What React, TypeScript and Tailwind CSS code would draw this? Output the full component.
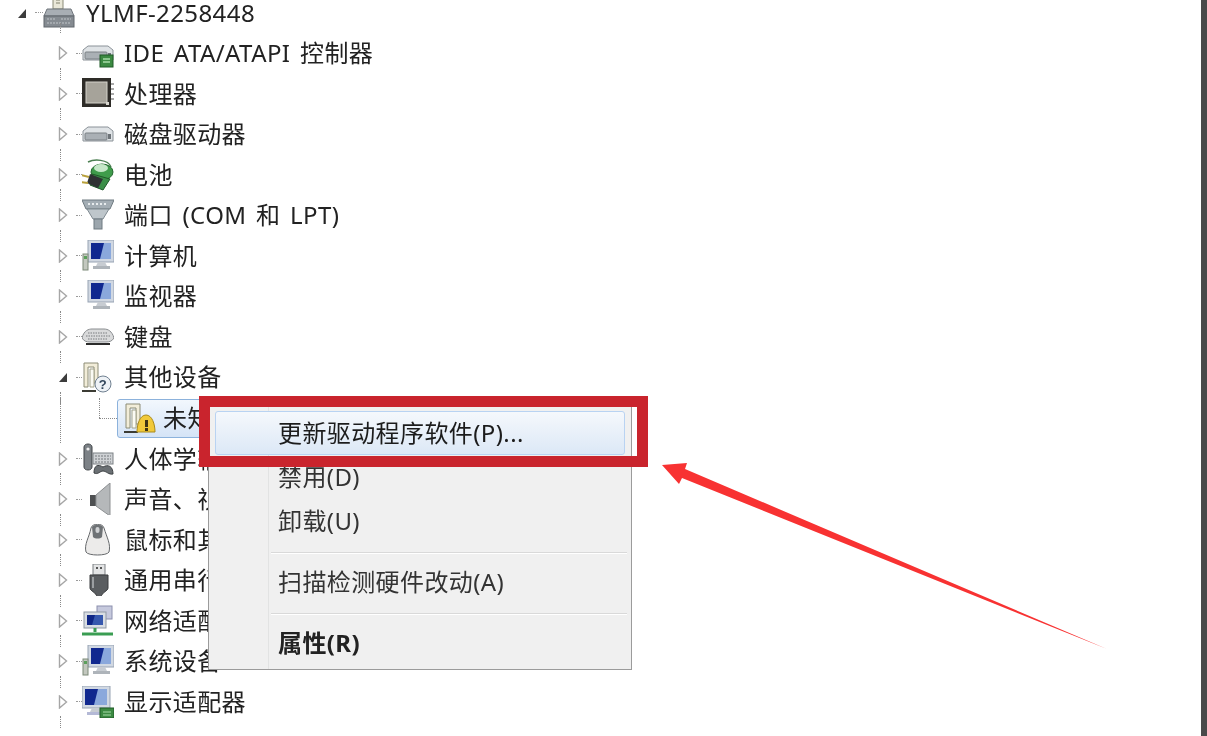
import * as React from "react";

const fontFamily = "font-['Noto_Sans','Noto_Sans_CJK_SC',sans-serif]";

function Drive({ badge }: { badge?: boolean }) {
  return (
    <svg viewBox="0 0 32 32" className="h-8 w-8">
      <path d="M1 13 L6 9 H26 L31 13 V23 H1 Z" fill="#dfe3e6" stroke="#8b9298" />
      <rect x="3" y="15" width="22" height="7" rx="1" fill="#aab0b5" stroke="#7a8085" />
      <rect x="26" y="16" width="3" height="5" fill="#6d7378" />
      {badge && <rect x="18" y="18" width="13" height="12" fill="#3c8a42" stroke="#1f5a26" />}
      {badge && <path d="M21 22h7M21 25h7" stroke="#a6dca8" strokeWidth="1.5" />}
    </svg>
  );
}

function Chip() {
  return (
    <svg viewBox="0 0 32 32" className="h-8 w-8">
      <rect x="0" y="0" width="29" height="29" fill="#2e2c28" />
      <rect x="4" y="4" width="21" height="21" fill="#a6a39a" stroke="#d4d2ca" />
      <rect x="24" y="24" width="3" height="3" fill="#d8d6cf" />
      <path d="M29 6h3M29 11h3M29 16h3M29 21h3" stroke="#555" />
    </svg>
  );
}

function Battery() {
  return (
    <svg viewBox="0 0 32 32" className="h-8 w-8">
      <path d="M6 3 C12 0 26 0 29 8" fill="none" stroke="#4c7f52" strokeWidth="1.5" />
      <ellipse cx="20" cy="13" rx="11" ry="8" fill="#3f9c4b" stroke="#22652c" />
      <ellipse cx="19" cy="9" rx="7" ry="4" fill="#c5e7c8" />
      <path d="M10 15 L28 20 L21 31 L8 26 Z" fill="#3b8e48" stroke="#1f5a28" />
      <path d="M8 15 L21 20 L16 29 L5 24 Z" fill="#2f3233" />
      <path d="M-1 16 L7 18 M-1 23 L6 24" stroke="#b9a13c" strokeWidth="2" />
    </svg>
  );
}

function Port() {
  return (
    <svg viewBox="0 0 32 32" className="h-8 w-8">
      <path d="M0 1 H32 L28 10 H4 Z" fill="#a3adb4" stroke="#6f7a81" />
      <path d="M5 10 H27 L21 20 H11 Z" fill="#bec6cb" stroke="#7f8a91" />
      <rect x="12" y="20" width="8" height="10" fill="#9ca6ad" stroke="#6f7a81" />
      <path d="M6 5h20" stroke="#e8ecee" strokeWidth="2" strokeDasharray="2 2" />
    </svg>
  );
}

function Monitor({ tower }: { tower?: boolean }) {
  return (
    <svg viewBox="0 0 32 32" className="h-8 w-8">
      <rect x="6" y="0" width="26" height="22" fill="#d1d8e2" stroke="#97a3b3" />
      <path d="M9 3 H29 V19 H9 Z" fill="#8aa8dc" />
      <path d="M9 3 H22 L18 19 H9 Z" fill="#10288f" />
      <path d="M16 22 H23 L25 26 H14 Z" fill="#c7ccd2" />
      <rect x="11" y="26" width="17" height="3" fill="#aeb4ba" />
      {tower && <rect x="1" y="14" width="5" height="16" fill="#c3c8bf" stroke="#7c8a78" />}
      {tower && <rect x="2" y="16" width="3" height="3" fill="#5ba05b" />}
    </svg>
  );
}

function Keyboard() {
  return (
    <svg viewBox="0 0 32 32" className="h-8 w-8">
      <path d="M0 17 C2 9 7 8 10 8 H22 C26 8 30 10 32 17 C30 20 28 21 24 21 H8 C4 21 2 20 0 17 Z" fill="#d9dadb" stroke="#8a8d90" />
      <path d="M6 12h20M4 15h24M6 18h20" stroke="#a9abad" strokeWidth="2" strokeDasharray="1.5 1" />
      <path d="M4 23 H28" stroke="#2b2b2b" strokeWidth="2" />
    </svg>
  );
}

function OtherDevice({ warning }: { warning?: boolean }) {
  return (
    <svg viewBox="0 0 32 32" className="h-8 w-8">
      <path d="M2 2 H16 V22 H12 V6 H6 V26 H2 Z" fill="#f2edd9" stroke="#8c8c76" />
      <path d="M8 8 H12 V26 H8 Z" fill="#fbfbf4" stroke="#a3a38c" />
      <path d="M0 30 H14" stroke="#3c3c34" strokeWidth="2" />
      {warning ? (
        <>
          <path d="M22 13 C28 13 31 22 31 30 H13 C13 22 16 13 22 13 Z" fill="#f1c93a" stroke="#a98a1c" />
          <rect x="21" y="18" width="3" height="7" fill="#3e3414" />
          <rect x="21" y="26" width="3" height="3" fill="#3e3414" />
        </>
      ) : (
        <>
          <circle cx="21" cy="23" r="8" fill="#eef2f6" stroke="#6f7f90" />
          <text x="21" y="28" textAnchor="middle" fontSize="13" fontWeight="700" fill="#33475c" fontFamily="Liberation Sans">?</text>
        </>
      )}
    </svg>
  );
}

function HumanInput() {
  return (
    <svg viewBox="0 0 32 32" className="h-8 w-8">
      <path d="M2 4 C2 0 10 0 10 4 V24 C10 28 2 28 2 24 Z" fill="#7c8186" stroke="#3f4347" />
      <circle cx="6" cy="6" r="1.6" fill="#eee" />
      <rect x="11" y="10" width="20" height="11" fill="#cfd2d5" stroke="#7d8185" />
      <path d="M13 13h16M13 16h16M13 19h16" stroke="#74787c" strokeDasharray="2 1" />
      <path d="M12 30 C12 22 16 21 21 24 C26 21 31 23 31 31 C27 32 24 28 21 28 C18 28 16 32 12 30 Z" fill="#6b7074" stroke="#3c4043" />
    </svg>
  );
}

function Speaker() {
  return (
    <svg viewBox="0 0 32 32" className="h-8 w-8">
      <rect x="8" y="12" width="6" height="11" fill="#4e5052" />
      <path d="M14 12 L28 0 V33 L14 23 Z" fill="#b5b8ba" stroke="#8d9092" />
    </svg>
  );
}

function Mouse() {
  return (
    <svg viewBox="0 0 32 32" className="h-8 w-8">
      <path d="M9 4 C10 -1 21 -1 22 4 C25 14 29 20 27 28 C25 32 6 32 4 28 C2 20 7 14 9 4 Z" fill="#ecebea" stroke="#65686b" />
      <path d="M10 3 C12 0 19 0 21 3 L20 13 C18 15 13 15 11 13 Z" fill="#6e7275" />
      <rect x="13.5" y="3" width="4" height="6" rx="2" fill="#cfd1d3" />
    </svg>
  );
}

function Usb() {
  return (
    <svg viewBox="0 0 32 32" className="h-8 w-8">
      <rect x="11" y="0" width="12" height="11" fill="#e3e4e5" stroke="#7d8083" />
      <rect x="14" y="3" width="2" height="2" fill="#555" />
      <rect x="18" y="3" width="2" height="2" fill="#555" />
      <path d="M8 11 H26 V24 C26 27 20 28 19 33 H15 C14 28 8 27 8 24 Z" fill="#5a5d60" stroke="#3a3c3e" />
      <path d="M11 13 V24" stroke="#9b9ea1" strokeWidth="2" />
    </svg>
  );
}

function Network() {
  return (
    <svg viewBox="0 0 32 32" className="h-8 w-8">
      <rect x="15" y="1" width="15" height="13" fill="#c6c9dd" stroke="#8c90ae" />
      <rect x="2" y="7" width="22" height="16" fill="#d8dde3" stroke="#8f99a5" />
      <path d="M5 10 H21 V20 H5 Z" fill="#3658ae" />
      <path d="M5 10 H13 L10 20 H5 Z" fill="#0f2686" />
      <path d="M13 23 V27" stroke="#3a9d52" strokeWidth="3" />
      <path d="M0 29 H31" stroke="#3a9d52" strokeWidth="3" />
    </svg>
  );
}

function Display() {
  return (
    <svg viewBox="0 0 32 32" className="h-8 w-8">
      <rect x="0" y="0" width="28" height="22" fill="#d1d8e2" stroke="#97a3b3" />
      <path d="M3 3 H25 V19 H3 Z" fill="#8aa8dc" />
      <path d="M3 3 H16 L12 19 H3 Z" fill="#10288f" />
      <path d="M10 22 H18 L20 26 H8 Z" fill="#c7ccd2" />
      <rect x="5" y="26" width="16" height="3" fill="#b4b9d6" />
      <rect x="18" y="22" width="14" height="10" fill="#3c8a42" stroke="#1f5a26" />
      <path d="M21 26h8M21 29h8" stroke="#a6dca8" />
    </svg>
  );
}

function Computer() {
  return (
    <svg viewBox="0 0 32 32" className="h-8 w-8">
      <rect x="10" y="0" width="10" height="12" fill="#e9e7d8" stroke="#8b8b78" />
      <path d="M13 3h4M13 6h4" stroke="#80806c" />
      <path d="M4 12 L28 12 L31 19 H1 Z" fill="#a8aeb4" stroke="#6f757b" />
      <rect x="1" y="19" width="30" height="11" fill="#858b91" stroke="#60666c" />
      <path d="M4 22 H13 M18 22 H28 M4 26 H28" stroke="#c1c6ca" strokeDasharray="2 1" />
    </svg>
  );
}

function Expander({ open }: { open?: boolean }) {
  return (
    <svg viewBox="0 0 10 14" className="h-3.5 w-2.5 shrink-0">
      {open ? <path d="M1 12 L9 12 L9 3 Z" fill="#3c3c3c" /> : <path d="M1.5 1 L8.5 7 L1.5 13 Z" fill="#fff" stroke="#a6a6a6" strokeWidth="1.4" />}
    </svg>
  );
}

type Row = { label: string; icon: React.ReactNode; open?: boolean };

const rows: Row[] = [
  { label: "IDE ATA/ATAPI 控制器", icon: <Drive badge /> },
  { label: "处理器", icon: <Chip /> },
  { label: "磁盘驱动器", icon: <Drive /> },
  { label: "电池", icon: <Battery /> },
  { label: "端口 (COM 和 LPT)", icon: <Port /> },
  { label: "计算机", icon: <Monitor tower /> },
  { label: "监视器", icon: <Monitor /> },
  { label: "键盘", icon: <Keyboard /> },
  { label: "其他设备", icon: <OtherDevice />, open: true },
];

const restRows: Row[] = [
  { label: "人体学输入设备", icon: <HumanInput /> },
  { label: "声音、视频和游戏控制器", icon: <Speaker /> },
  { label: "鼠标和其他指针设备", icon: <Mouse /> },
  { label: "通用串行总线控制器", icon: <Usb /> },
  { label: "网络适配器", icon: <Network /> },
  { label: "系统设备", icon: <Monitor tower /> },
  { label: "显示适配器", icon: <Display /> },
];

function TreeRow({ row }: { row: Row }) {
  return (
    <div className="relative flex h-[40.5px] items-center pl-[58px]">
      <Expander open={row.open} />
      <span className="ml-[8px] w-[6px] border-t border-dotted border-[#9a9a9a]" />
      <span className="mr-[10px] shrink-0">{row.icon}</span>
      <span className="whitespace-nowrap">{row.label}</span>
      <span className="absolute bottom-[-6px] left-[60px] h-[12px] border-l border-dotted border-[#8a8a8a]" />
    </div>
  );
}

function MenuItem({ children, bold, active }: { children: React.ReactNode; bold?: boolean; active?: boolean }) {
  return (
    <div className={active
      ? "mx-[6px] flex h-[44px] items-center rounded-[3px] border border-[#b9d3f2] bg-gradient-to-b from-[#f5f8fc] to-[#dce8f6] pl-[62px] text-[#1c1c1c]"
      : `flex h-[44px] items-center pl-[69px] ${bold ? "font-bold text-[#222]" : "text-[#333]"}`}>
      {children}
    </div>
  );
}

function MenuSeparator() {
  return (
    <div className="ml-[62px] mr-[4px] h-[17px] pt-[9px]">
      <div className="h-[2px] border-t border-[#d9d9d9] bg-white" />
    </div>
  );
}

export default function App() {
  return (
    <div className={`relative flex h-[736px] w-[1207px] overflow-hidden bg-white text-[24px] leading-none tracking-[0.4px] [word-spacing:3px] text-[#222] ${fontFamily}`}>
      <div className="min-w-0 flex-1 blur-[0.5px]">
        <div className="relative flex h-[25px] items-center pl-[17px]">
          <Expander open />
          <span className="ml-[8px] w-[8px] border-t border-dotted border-[#9a9a9a]" />
          <span className="mr-[11px] shrink-0"><Computer /></span>
          <span className="whitespace-nowrap">YLMF-2258448</span>
          <span className="absolute bottom-[-8px] left-[60px] h-[10px] border-l border-dotted border-[#8a8a8a]" />
        </div>
        <div className="pt-[8px]">
          {rows.map((row) => <TreeRow key={row.label} row={row} />)}
          <div className="relative flex h-[41px] items-center pl-[99px]">
            <span className="absolute left-[60px] top-0 h-[45px] border-l border-dotted border-[#8a8a8a]" />
            <span className="absolute left-[99px] top-0 h-[20px] border-l border-dotted border-[#8a8a8a]" />
            <span className="w-[18px] border-t border-dotted border-[#8a8a8a]" />
            <div className="flex h-[39px] w-[120px] items-center rounded-[3px] border border-[#8cb2dc] bg-gradient-to-b from-[#f2f7fd] to-[#d5e4f6] pl-[6px]">
              <span className="mr-[7px] shrink-0"><OtherDevice warning /></span>
              <span className="whitespace-nowrap">未知设备</span>
            </div>
          </div>
          {restRows.map((row) => <TreeRow key={row.label} row={row} />)}
        </div>
      </div>
      <div className="w-[6px] bg-[#4a4a4a]" />

      {/* context menu */}
      <div className="absolute left-[208px] top-[400px] h-[270px] w-[424px] border border-[#9b9b9b] bg-[#f0f0f0] pt-[10px] blur-[0.4px]">
        <span className="absolute bottom-0 left-[59px] top-0 border-l border-[#e2e3e3]" />
        <div className="relative">
          <MenuItem active>更新驱动程序软件(P)...</MenuItem>
          <MenuItem>禁用(D)</MenuItem>
          <MenuItem>卸载(U)</MenuItem>
          <MenuSeparator />
          <MenuItem>扫描检测硬件改动(A)</MenuItem>
          <MenuSeparator />
          <MenuItem bold>属性(R)</MenuItem>
        </div>
      </div>

      {/* annotations */}
      <div className="absolute left-[199px] top-[396px] h-[71px] w-[449px] border-[11px] border-[#c9242d]" />
      <svg className="absolute left-0 top-0" width="1207" height="736" viewBox="0 0 1207 736">
        <path d="M662 465 L687 463 L685 469 L1107 649 L682 478 L679 484 Z" fill="#f83232" />
      </svg>
    </div>
  );
}
